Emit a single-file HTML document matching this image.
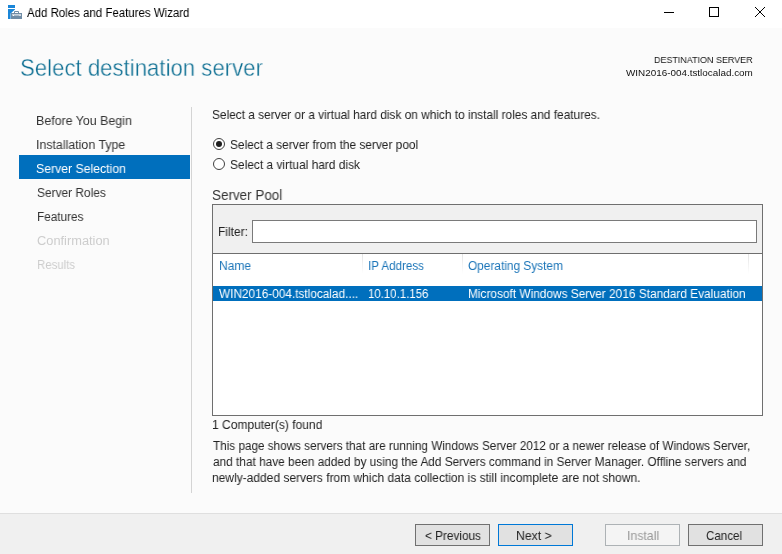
<!DOCTYPE html>
<html><head><meta charset="utf-8">
<style>
*{margin:0;padding:0;box-sizing:border-box}
html,body{width:782px;height:554px;overflow:hidden;background:#fbfbfb;font-family:"Liberation Sans",sans-serif;position:relative}
.a{position:absolute}
.t{position:absolute;white-space:nowrap;line-height:1;transform-origin:0 0;will-change:transform}
#tb{position:absolute;left:0;top:0;width:782px;height:28px;background:#fff}
#foot{position:absolute;left:0;top:513px;width:782px;height:41px;background:#f0f0f0;border-top:1px solid #dfdfdf}
.btn{position:absolute;top:524px;width:75px;height:22px;background:#e1e1e1;border:1px solid #707070}
</style></head><body>
<div id="tb"></div>
<svg class="a" style="left:0;top:0" width="30" height="28">
<rect x="8" y="5" width="7" height="3" fill="#1a86d8"/>
<path d="M8 9H15V9.6L10.6 13.6V19H8Z" fill="#1a86d8"/>
<path d="M14.5 13V11.5H18.5V13" stroke="#6f8ca6" stroke-width="1" fill="none"/>
<rect x="11" y="13" width="11" height="6" fill="#6f8ca6"/>
<rect x="12" y="14.4" width="9" height="1" fill="#fff"/>
<rect x="13" y="15" width="1" height="1" fill="#fff"/>
<rect x="19.5" y="15" width="1" height="1" fill="#fff"/>
</svg>
<div class="a" style="left:664px;top:12px;width:10px;height:1px;background:#000"></div>
<div class="a" style="left:709px;top:7px;width:10px;height:10px;border:1px solid #000"></div>
<svg class="a" style="left:754px;top:6px" width="12" height="12"><path d="M1 1L11 11M11 1L1 11" stroke="#000" stroke-width="1"/></svg>

<div class="a" style="left:19px;top:155px;width:171px;height:24px;background:#006fbd"></div>
<div class="a" style="left:191px;top:107px;width:1px;height:386px;background:#d4d4d4"></div>

<!-- radios -->
<div class="a" style="left:213px;top:138px;width:12px;height:12px;border:1px solid #404040;border-radius:50%;background:#fff"></div>
<div class="a" style="left:216px;top:141px;width:6px;height:6px;border-radius:50%;background:#1e1e1e"></div>
<div class="a" style="left:213px;top:158px;width:12px;height:12px;border:1px solid #404040;border-radius:50%;background:#fff"></div>

<!-- server pool box -->
<div class="a" style="left:212px;top:204px;width:551px;height:212px;border:1px solid #6f6f6f;background:#fff"></div>
<div class="a" style="left:213px;top:205px;width:549px;height:48px;background:#f0f0f0"></div>
<div class="a" style="left:213px;top:253px;width:549px;height:1px;background:#6e6e6e"></div>
<div class="a" style="left:252px;top:220px;width:505px;height:23px;border:1px solid #7a7a7a;background:#fff"></div>
<div class="a" style="left:362px;top:254px;width:1px;height:20px;background:linear-gradient(#e4e4e4,#fff)"></div>
<div class="a" style="left:462px;top:254px;width:1px;height:20px;background:linear-gradient(#e4e4e4,#fff)"></div>
<div class="a" style="left:748px;top:254px;width:1px;height:20px;background:linear-gradient(#e4e4e4,#fff)"></div>
<div class="a" style="left:213px;top:286px;width:549px;height:15px;background:#006fbd"></div>

<div id="foot"></div>
<div class="btn" style="left:415px"></div>
<div class="btn" style="left:498px;border-color:#0078d7"></div>
<div class="btn" style="left:605px;background:#f4f4f4;border-color:#adb2b5"></div>
<div class="btn" style="left:688px"></div>
<div class="t" id="t_title" style="left:27.40px;top:5.92px;font-size:13.08px;color:#000;transform:scaleX(0.8763)">Add Roles and Features Wizard</div>
<div class="t" id="t_head" style="left:19.60px;top:57.44px;font-size:23.69px;color:#0c6e92;-webkit-text-stroke:0.35px #fbfbfb;transform:scaleX(0.9365)">Select destination server</div>
<div class="t" id="t_ds" style="left:654.40px;top:54.63px;font-size:9.88px;color:#111;transform:scaleX(0.9063)">DESTINATION SERVER</div>
<div class="t" id="t_dsn" style="left:626.40px;top:67.63px;font-size:9.88px;color:#111;transform:scaleX(0.9979)">WIN2016-004.tstlocalad.com</div>
<div class="t" id="n1" style="left:36.20px;top:115.29px;font-size:12.65px;color:#333;transform:scaleX(0.9815)">Before You Begin</div>
<div class="t" id="n2" style="left:36.20px;top:139.29px;font-size:12.65px;color:#333;transform:scaleX(0.9800)">Installation Type</div>
<div class="t" id="n3" style="left:36.20px;top:163.29px;font-size:12.65px;color:#fff;transform:scaleX(0.9695)">Server Selection</div>
<div class="t" id="n4" style="left:36.60px;top:187.29px;font-size:12.65px;color:#333;transform:scaleX(0.9421)">Server Roles</div>
<div class="t" id="n5" style="left:36.60px;top:211.29px;font-size:12.65px;color:#333;transform:scaleX(0.9317)">Features</div>
<div class="t" id="n6" style="left:37.00px;top:235.29px;font-size:12.65px;color:#cdcdcd;transform:scaleX(1.0144)">Confirmation</div>
<div class="t" id="n7" style="left:37.00px;top:259.29px;font-size:12.65px;color:#cdcdcd;transform:scaleX(0.9027)">Results</div>
<div class="t" id="m1" style="left:211.60px;top:109.17px;font-size:12.79px;color:#222;transform:scaleX(0.9287)">Select a server or a virtual hard disk on which to install roles and features.</div>
<div class="t" id="r1" style="left:230.40px;top:139.17px;font-size:12.79px;color:#222;transform:scaleX(0.9294)">Select a server from the server pool</div>
<div class="t" id="r2" style="left:230.40px;top:159.17px;font-size:12.79px;color:#222;transform:scaleX(0.9340)">Select a virtual hard disk</div>
<div class="t" id="sp" style="left:211.80px;top:189.01px;font-size:13.81px;color:#333;transform:scaleX(0.9751)">Server Pool</div>
<div class="t" id="fl" style="left:217.80px;top:226.17px;font-size:12.79px;color:#222;transform:scaleX(0.9367)">Filter:</div>
<div class="t" id="c1" style="left:218.80px;top:260.29px;font-size:12.65px;color:#1a74b8;transform:scaleX(0.9476)">Name</div>
<div class="t" id="c2" style="left:368.00px;top:260.29px;font-size:12.65px;color:#1a74b8;transform:scaleX(0.9192)">IP Address</div>
<div class="t" id="c3" style="left:468.20px;top:260.29px;font-size:12.65px;color:#1a74b8;transform:scaleX(0.9377)">Operating System</div>
<div class="t" id="d1" style="left:218.60px;top:288.29px;font-size:12.65px;color:#fff;transform:scaleX(0.9345)">WIN2016-004.tstlocalad....</div>
<div class="t" id="d2" style="left:367.80px;top:288.29px;font-size:12.65px;color:#fff;transform:scaleX(0.9035)">10.10.1.156</div>
<div class="t" id="d3" style="left:468.20px;top:288.29px;font-size:12.65px;color:#fff;transform:scaleX(0.9385)">Microsoft Windows Server 2016 Standard Evaluation</div>
<div class="t" id="cf" style="left:212.20px;top:419.29px;font-size:12.65px;color:#222;transform:scaleX(0.9519)">1 Computer(s) found</div>
<div class="t" id="p1" style="left:212.80px;top:440.29px;font-size:12.65px;color:#222;transform:scaleX(0.9270)">This page shows servers that are running Windows Server 2012 or a newer release of Windows Server,</div>
<div class="t" id="p2" style="left:212.80px;top:456.29px;font-size:12.65px;color:#222;transform:scaleX(0.9367)">and that have been added by using the Add Servers command in Server Manager. Offline servers and</div>
<div class="t" id="p3" style="left:211.80px;top:472.29px;font-size:12.65px;color:#222;transform:scaleX(0.9499)">newly-added servers from which data collection is still incomplete are not shown.</div>
<div class="t" id="b1" style="left:424.60px;top:530.17px;font-size:12.79px;color:#222;transform:scaleX(0.9210)">&lt; Previous</div>
<div class="t" id="b2" style="left:516.40px;top:530.17px;font-size:12.79px;color:#222;transform:scaleX(0.9599)">Next &gt;</div>
<div class="t" id="b3" style="left:626.60px;top:530.17px;font-size:12.79px;color:#9a9a9a;transform:scaleX(0.9645)">Install</div>
<div class="t" id="b4" style="left:706.40px;top:530.17px;font-size:12.79px;color:#222;transform:scaleX(0.9073)">Cancel</div>
</body></html>
